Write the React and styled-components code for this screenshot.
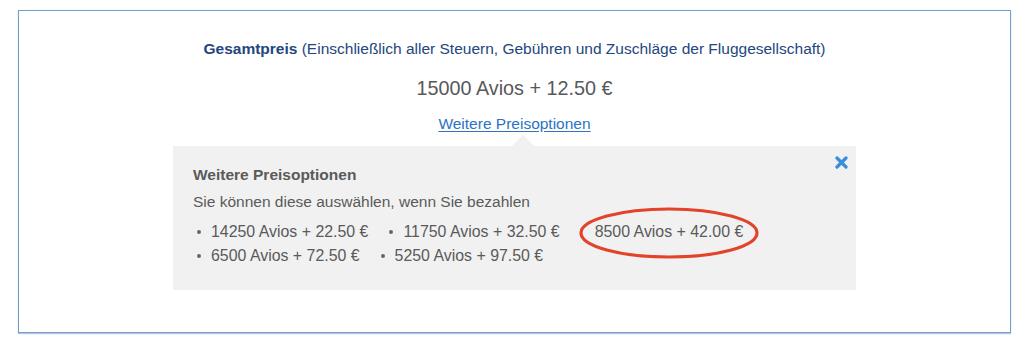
import React from 'react';
import styled, { createGlobalStyle } from 'styled-components';

const GlobalStyle = createGlobalStyle`
  html, body {
    margin: 0;
    padding: 0;
    background: #fff;
    font-family: "Liberation Sans", Arial, sans-serif;
  }
`;

const Page = styled.div`
  width: 1024px;
  height: 352px;
  padding: 10px 13px 0 18px;
  box-sizing: border-box;
`;

const Frame = styled.section`
  height: 323px;
  box-sizing: border-box;
  border: 1px solid #6b9fd6;
  box-shadow: 0 1px 1px rgba(60, 90, 130, 0.35);
  display: flex;
  flex-direction: column;
  align-items: center;
  padding-top: 28px;
`;

const Total = styled.p`
  margin: 0;
  font-size: 15.5px;
  line-height: 20px;
  color: #23467e;

  strong {
    font-weight: 700;
  }
`;

const Price = styled.p`
  margin: 18px 0 0;
  font-size: 19.8px;
  line-height: 22px;
  color: #595959;
`;

const MoreLink = styled.a`
  margin-top: 15px;
  font-size: 15.5px;
  line-height: 20px;
  color: #2d72c4;
  text-decoration: underline;
  text-underline-offset: 2px;
  cursor: pointer;
`;

const Popover = styled.div`
  position: relative;
  margin-top: 12px;
  width: 683px;
  height: 144px;
  box-sizing: border-box;
  background: #f1f1f1;
  padding: 19px 20px 0;
  color: #5a5a5a;

  &::before {
    content: "";
    position: absolute;
    top: -11px;
    left: 339px;
    border-left: 11px solid transparent;
    border-right: 11px solid transparent;
    border-bottom: 11px solid #f1f1f1;
  }
`;

const Close = styled.button`
  position: absolute;
  top: 7px;
  right: 6px;
  width: 18px;
  height: 18px;
  padding: 0;
  border: 0;
  background: none;
  cursor: pointer;
  display: flex;
  align-items: center;
  justify-content: center;
`;

const Title = styled.h3`
  margin: 0;
  font-size: 15.5px;
  line-height: 20px;
  font-weight: 700;
  color: #5a5a5a;
`;

const Hint = styled.p`
  margin: 7px 0 0;
  font-size: 15.5px;
  line-height: 20px;
`;

const Options = styled.ul`
  list-style: none;
  margin: 10px 0 0;
  padding: 0 0 0 4px;
  display: flex;
  flex-wrap: wrap;
  width: 580px;
  row-gap: 4px;
`;

const Option = styled.li`
  position: relative;
  display: flex;
  align-items: center;
  margin-right: 21px;
  font-size: 15.9px;
  line-height: 20px;

  &::before {
    content: "";
    width: 4px;
    height: 4px;
    border-radius: 50%;
    background: ${p => (p.$bare ? 'transparent' : '#666')};
    margin-right: 10px;
  }
`;

const Marker = styled.svg`
  position: absolute;
  left: -3px;
  top: -16px;
  pointer-events: none;
`;

const options = [
  '14250 Avios + 22.50 €',
  '11750 Avios + 32.50 €',
  '8500 Avios + 42.00 €',
  '6500 Avios + 72.50 €',
  '5250 Avios + 97.50 €',
];

export default function App() {
  return (
    <>
      <GlobalStyle />
      <Page>
        <Frame>
          <Total>
            <strong>Gesamtpreis</strong> (Einschließlich aller Steuern, Gebühren und Zuschläge der Fluggesellschaft)
          </Total>
          <Price>15000 Avios + 12.50 €</Price>
          <MoreLink>Weitere Preisoptionen</MoreLink>
          <Popover>
            <Close aria-label="Schließen">
              <svg width="13" height="13" viewBox="0 0 13 13">
                <path d="M2 2 L11 11 M11 2 L2 11" stroke="#3a8ddb" strokeWidth="3.2" strokeLinecap="round" />
              </svg>
            </Close>
            <Title>Weitere Preisoptionen</Title>
            <Hint>Sie können diese auswählen, wenn Sie bezahlen</Hint>
            <Options>
              {options.map((o, i) => (
                <Option key={o} $bare={i === 2}>
                  {o}
                  {i === 2 && (
                    <Marker width="182" height="54" viewBox="0 0 182 54">
                      <ellipse cx="91" cy="27" rx="88" ry="24" fill="none" stroke="#e2442b" strokeWidth="3.2" />
                    </Marker>
                  )}
                </Option>
              ))}
            </Options>
          </Popover>
        </Frame>
      </Page>
    </>
  );
}
